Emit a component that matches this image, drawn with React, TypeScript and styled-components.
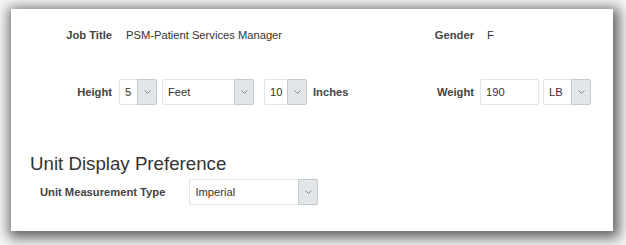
import React from 'react'
import styled, { createGlobalStyle } from 'styled-components'

const GlobalStyle = createGlobalStyle`
  html,
  body {
    margin: 0;
    padding: 0;
    background: #fff;
  }

  body {
    font-family: 'Liberation Sans', Arial, sans-serif;
    color: #333;
  }
`

const Page = styled.div`
  width: 626px;
  height: 245px;
  box-sizing: border-box;
  padding: 9px 13px 14px 11px;
  background: #f6f6f6;
`

const Panel = styled.section`
  height: 222px;
  box-sizing: border-box;
  padding-top: 13px;
  background: #fff;
  box-shadow: 2px 3px 12px 4px rgba(0, 0, 0, 0.6);
`

const FormGrid = styled.div`
  display: grid;
  grid-template-columns: 108px 240px 121px 1fr;
  grid-auto-rows: 26px;
  row-gap: 31px;
  align-items: center;
`

const Label = styled.label<{ $pad?: number }>`
  text-align: right;
  padding-right: ${p => p.$pad ?? 7}px;
  font-size: 11.2px;
  font-weight: bold;
  color: #444;
  white-space: nowrap;
`

const ReadValue = styled.span`
  padding-left: 7px;
  font-size: 11.2px;
  color: #333;
`

const FieldGroup = styled.div`
  display: flex;
  align-items: center;
  gap: 5px;
`

const Box = styled.div<{ $w: number; $ml?: number }>`
  width: ${p => p.$w}px;
  margin-left: ${p => p.$ml ?? 0}px;
  height: 26px;
  box-sizing: border-box;
  display: flex;
  align-items: stretch;
  border: 1px solid #dfe4e8;
  border-radius: 2px;
  background: #fff;
  font-size: 11.2px;
  color: #333;
`

const BoxText = styled.span`
  flex: 1;
  display: flex;
  align-items: center;
  padding-left: 5px;
`

const Arrow = styled.span`
  width: 18px;
  margin: -1px -1px -1px 0;
  display: flex;
  align-items: center;
  justify-content: center;
  background: #e3e6e8;
  border: 1px solid #c4cacd;
  border-radius: 0 2px 2px 0;
`

const UnitText = styled.span<{ $ml?: number }>`
  margin-left: ${p => p.$ml ?? 0}px;
  font-size: 11.2px;
  font-weight: bold;
  color: #444;
`

const SectionTitle = styled.h2`
  margin: 48px 0 0;
  padding-left: 19px;
  font-size: 18.7px;
  line-height: 22px;
  font-weight: normal;
  color: #333;
`

const PrefRow = styled.div`
  display: flex;
  align-items: center;
  gap: 24px;
  margin-top: 4px;
  padding-left: 29px;
`

function Chevron() {
  return (
    <svg width="7" height="4" viewBox="0 0 7 4">
      <path d="M0.5 0.5 L3.5 3.5 L6.5 0.5" fill="none" stroke="#888" strokeWidth="1" />
    </svg>
  )
}

function Select({ value, width, ml }: { value: string; width: number; ml?: number }) {
  return (
    <Box $w={width} $ml={ml}>
      <BoxText>{value}</BoxText>
      <Arrow>
        <Chevron />
      </Arrow>
    </Box>
  )
}

export default function App() {
  return (
    <>
      <GlobalStyle />
      <Page>
        <Panel>
          <FormGrid>
            <Label>Job Title</Label>
            <ReadValue>PSM-Patient Services Manager</ReadValue>
            <Label $pad={6}>Gender</Label>
            <ReadValue>F</ReadValue>

            <Label>Height</Label>
            <FieldGroup>
              <Select value="5" width={38} />
              <Select value="Feet" width={92} />
              <Select value="10" width={43} ml={5} />
              <UnitText $ml={1}>Inches</UnitText>
            </FieldGroup>
            <Label $pad={6}>Weight</Label>
            <FieldGroup>
              <Box $w={59}>
                <BoxText>190</BoxText>
              </Box>
              <Select value="LB" width={48} ml={-1} />
            </FieldGroup>
          </FormGrid>

          <SectionTitle>Unit Display Preference</SectionTitle>
          <PrefRow>
            <Label $pad={0}>Unit Measurement Type</Label>
            <Select value="Imperial" width={129} />
          </PrefRow>
        </Panel>
      </Page>
    </>
  )
}
